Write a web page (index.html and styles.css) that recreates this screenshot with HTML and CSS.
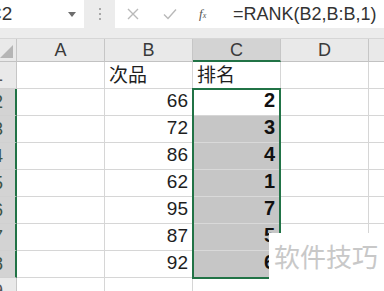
FILE: index.html
```html
<!DOCTYPE html>
<html>
<head>
<meta charset="utf-8">
<link rel="stylesheet" href="styles.css">
</head>
<body>
<div class="page">
  <div class="bar">
    <div class="namebox">
      <span class="name">C2</span>
      <svg class="drop" width="8" height="5" viewBox="0 0 8 5"><path d="M0 0H8L4 5Z" fill="#6d6d6d"/></svg>
    </div>
    <div class="grip"><i></i><i></i><i></i></div>
    <div class="formula">
      <svg class="icon" width="12" height="12" viewBox="0 0 12 12"><path d="M1 1L11 11M11 1L1 11" stroke="#b9b9b9" stroke-width="1.4" fill="none"/></svg>
      <svg class="icon ok" width="14" height="12" viewBox="0 0 14 12"><path d="M1 6.5L5 10.5L13 1.5" stroke="#b9b9b9" stroke-width="1.4" fill="none"/></svg>
      <span class="fx">f<sub>x</sub></span>
      <span class="ftext">=RANK(B2,B:B,1)</span>
    </div>
  </div>
  <div class="grid">
    <div class="corner"><span class="tri"></span></div>
    <div class="ch">A</div>
    <div class="ch">B</div>
    <div class="ch sel">C</div>
    <div class="ch">D</div>
    <div class="ch"></div>

    <div class="rh"><span>1</span></div>
    <div class="c"></div><div class="c t">次品</div><div class="c t">排名</div><div class="c"></div><div class="c"></div>

    <div class="rh on"><span>2</span></div>
    <div class="c"></div><div class="c n">66</div><div class="c n b">2</div><div class="c"></div><div class="c"></div>

    <div class="rh on"><span>3</span></div>
    <div class="c"></div><div class="c n">72</div><div class="c n b g">3</div><div class="c"></div><div class="c"></div>

    <div class="rh on"><span>4</span></div>
    <div class="c"></div><div class="c n">86</div><div class="c n b g">4</div><div class="c"></div><div class="c"></div>

    <div class="rh on"><span>5</span></div>
    <div class="c"></div><div class="c n">62</div><div class="c n b g">1</div><div class="c"></div><div class="c"></div>

    <div class="rh on"><span>6</span></div>
    <div class="c"></div><div class="c n">95</div><div class="c n b g">7</div><div class="c"></div><div class="c"></div>

    <div class="rh on"><span>7</span></div>
    <div class="c"></div><div class="c n">87</div><div class="c n b g">5</div><div class="c"></div><div class="c"></div>

    <div class="rh on"><span>8</span></div>
    <div class="c"></div><div class="c n">92</div><div class="c n b g">6</div><div class="c"></div><div class="c"></div>

    <div class="rh"><span>9</span></div>
    <div class="c"></div><div class="c"></div><div class="c"></div><div class="c"></div><div class="c"></div>

    <div class="selbox"></div>
  </div>
  <div class="mark">软件技巧</div>
</div>
</body>
</html>
```

FILE: styles.css
```css
html, body {
  margin: 0;
  padding: 0;
  background: #ffffff;
  overflow: hidden;
}
.page {
  position: relative;
  width: 384px;
  height: 291px;
  overflow: hidden;
  font-family: "Liberation Sans", Arial, "Noto Sans CJK SC", sans-serif;
  color: #222;
}
.bar {
  display: flex;
  height: 39px;
  background: #ececec;
  box-sizing: border-box;
  border-bottom: 1px solid #d6d6d6;
}
.namebox {
  width: 84px;
  height: 28px;
  background: #fff;
  display: flex;
  align-items: center;
  overflow: hidden;
}
.name {
  font-size: 19px;
  margin-left: -12px;
  color: #333;
}
.drop {
  margin-left: auto;
  margin-right: 8px;
}
.grip {
  width: 31px;
  height: 28px;
  display: flex;
  flex-direction: column;
  align-items: center;
  justify-content: center;
  gap: 3px;
}
.grip i {
  width: 2px;
  height: 2px;
  background: #a9a9a9;
}
.formula {
  flex: 1;
  height: 28px;
  background: #fff;
  display: flex;
  align-items: center;
  padding-left: 12px;
}
.icon {
  margin-right: 24px;
}
.ok {
  margin-right: 22px;
}
.fx {
  font-family: "Liberation Serif", serif;
  font-style: italic;
  font-size: 13px;
  color: #555;
  width: 34px;
}
.fx sub {
  font-size: 8px;
  vertical-align: 0;
}
.ftext {
  font-size: 18px;
  color: #333;
  white-space: nowrap;
}
.grid {
  position: relative;
  display: grid;
  grid-template-columns: 17px 88px 88px 88px 88px 88px;
  grid-template-rows: 23px repeat(9, 27px);
}
.corner, .ch, .rh {
  background: #e9e9e9;
  box-sizing: border-box;
  border-right: 1px solid #c6c6c6;
  border-bottom: 1px solid #c2c2c2;
}
.corner {
  display: flex;
  align-items: flex-end;
  justify-content: flex-end;
  padding: 0 3px 3px 0;
}
.tri {
  width: 0;
  height: 0;
  border-left: 13px solid transparent;
  border-bottom: 13px solid #b5b5b5;
}
.ch {
  display: flex;
  align-items: center;
  justify-content: center;
  font-size: 18px;
  color: #3a3a3a;
  padding-top: 1px;
}
.ch.sel {
  background: #d3d3d3;
  border-bottom: 2px solid #217346;
}
.rh {
  display: flex;
  justify-content: flex-end;
  align-items: center;
  overflow: hidden;
  font-size: 18px;
  color: #555;
  padding-right: 13px;
  border-bottom: 1px solid #d0d0d0;
}
.rh.on {
  background: #d3d3d3;
  border-right: 2px solid #217346;
  padding-right: 12px;
  color: #3d5446;
}
.c {
  box-sizing: border-box;
  border-right: 1px solid #d6d6d6;
  border-bottom: 1px solid #d6d6d6;
  display: flex;
  align-items: flex-end;
  padding: 0 4px 3px 4px;
  font-size: 19px;
  color: #1e1e1e;
}
.t {
  font-family: "Noto Sans CJK SC", sans-serif;
  font-size: 19px;
  padding-bottom: 1px;
}
.n {
  justify-content: flex-end;
}
.b {
  font-weight: bold;
  font-size: 20px;
  color: #111;
  padding-right: 5px;
}
.g {
  background: #c6c6c6;
  border-bottom-color: #d9d9d9;
  border-right-color: #c6c6c6;
}
.selbox {
  position: absolute;
  grid-column: 4 / 5;
  grid-row: 3 / 10;
  top: -1px;
  bottom: -1px;
  left: -1px;
  right: 0;
  border: 2px solid #217346;
  pointer-events: none;
}
.mark {
  position: absolute;
  left: 269px;
  top: 233px;
  width: 115px;
  height: 58px;
  background: #fff;
  color: #c8c8c8;
  font-family: "Noto Sans CJK SC", sans-serif;
  font-size: 26px;
  padding: 4px 0 0 5px;
  box-sizing: border-box;
  white-space: nowrap;
}
```
